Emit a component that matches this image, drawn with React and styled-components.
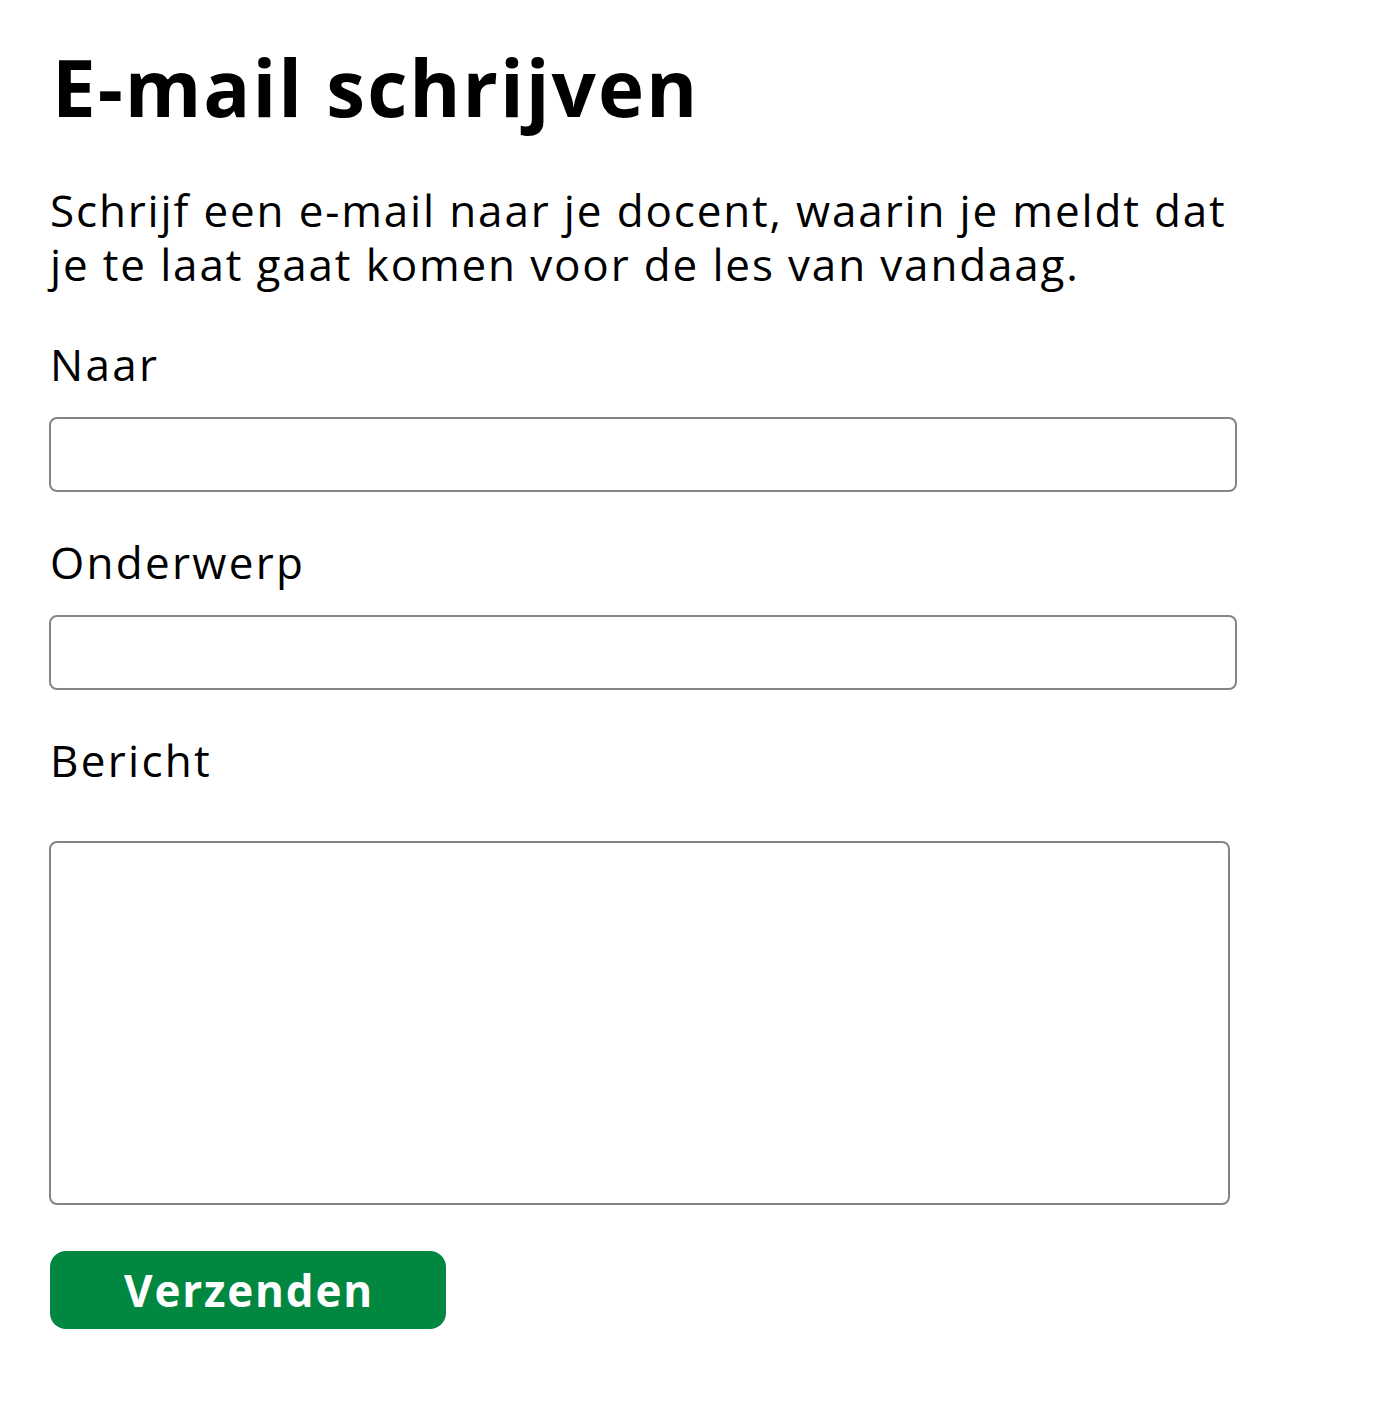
import React from "react";
import styled, { createGlobalStyle } from "styled-components";

const Global = createGlobalStyle`
  html, body { margin: 0; padding: 0; background: #ffffff; }
  body { font-family: "Open Sans", "Noto Sans", sans-serif; color: #000; }
  * { box-sizing: border-box; }
`;

const Page = styled.main`
  padding: 39px 0 0 49px;
  width: 1237px;
  display: flex;
  flex-direction: column;
`;

const Title = styled.h1`
  margin: 0;
  font-size: 78px;
  line-height: 96px;
  font-weight: 700;
  padding-left: 3px;
  letter-spacing: 2px;
`;

const Intro = styled.p`
  margin: 48px 0 0 0;
  padding-left: 1px;
  font-size: 44px;
  line-height: 54px;
  font-weight: 400;
  letter-spacing: 1.85px;
  white-space: nowrap;
`;

const Field = styled.div`
  display: flex;
  flex-direction: column;
  margin-top: ${(p) => p.$top}px;
`;

const Label = styled.label`
  font-size: 44px;
  line-height: 54px;
  padding-left: 1px;
  letter-spacing: 2.3px;
`;

const Input = styled.input`
  margin-top: 26px;
  width: 1188px;
  height: 75px;
  border: 2px solid #858585;
  border-radius: 8px;
  font: inherit;
  font-size: 40px;
  padding: 0 16px;
  outline: none;
`;

const TextArea = styled.textarea`
  margin-top: 54px;
  width: 1181px;
  height: 364px;
  border: 2px solid #858585;
  border-radius: 8px;
  font: inherit;
  font-size: 40px;
  padding: 12px 16px;
  resize: none;
  outline: none;
  display: block;
`;

const Button = styled.button`
  margin-top: 46px;
  width: 396px;
  height: 78px;
  border: none;
  border-radius: 16px;
  background: #028741;
  color: #fff;
  font-family: "Open Sans", "Noto Sans", sans-serif;
  font-weight: 700;
  font-size: 44px;
  letter-spacing: 1.8px;
  line-height: 1;
  padding: 0 0 0 2px;
  cursor: pointer;
  align-self: flex-start;
  margin-left: 1px;
`;

export default function App() {
  return (
    <>
      <Global />
      <Page>
        <Title>E-mail schrijven</Title>
        <Intro>
          Schrijf een e-mail naar je docent, waarin je meldt dat
          <br />
          je te laat gaat komen voor de les van vandaag.
        </Intro>
        <Field $top={46}>
          <Label htmlFor="naar">Naar</Label>
          <Input id="naar" type="text" />
        </Field>
        <Field $top={43}>
          <Label htmlFor="onderwerp">Onderwerp</Label>
          <Input id="onderwerp" type="text" />
        </Field>
        <Field $top={43}>
          <Label htmlFor="bericht">Bericht</Label>
          <TextArea id="bericht" />
        </Field>
        <Button type="button">Verzenden</Button>
      </Page>
    </>
  );
}
